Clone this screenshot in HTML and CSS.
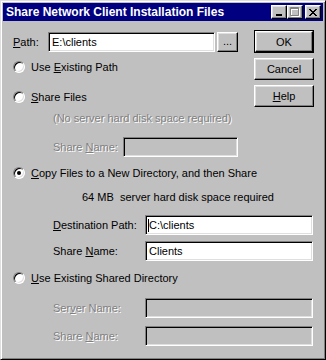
FILE: index.html
```html
<!DOCTYPE html>
<html lang="en">
<head>
  <meta charset="UTF-8">
  <title>Share Network Client Installation Files</title>
  <link rel="stylesheet" href="styles.css">
</head>
<body>
  <div class="window">
    <div class="titlebar">
      <span class="title">Share Network Client Installation Files</span>
      <div class="title-buttons">
        <span class="tbtn">
          <svg width="8" height="7" viewBox="0 0 8 7"><rect x="1" y="5" width="6" height="2" fill="#000"/></svg>
        </span>
        <span class="tbtn">
          <svg width="10" height="10" viewBox="0 0 10 10">
            <path d="M1.5 1.5h8v8h-8z M1 2.5h9" stroke="#fff" fill="none" stroke-width="1"/>
            <path d="M0.5 0.5h8v8h-8z M0 1.5h9" stroke="#808080" fill="none" stroke-width="1"/>
          </svg>
        </span>
        <span class="tbtn close">
          <svg width="8" height="7" viewBox="0 0 8 7" shape-rendering="crispEdges">
            <path d="M0 0h2v1h1v1h2v-1h1v-1h2v1h-1v1h-1v1h-1v1h1v1h1v1h1v1h-2v-1h-1v-1h-2v1h-1v1h-2v-1h1v-1h1v-1h1v-1h-1v-1h-1v-1h-1z" fill="#000"/>
          </svg>
        </span>
      </div>
    </div>

    <div class="dialog">
      <div class="top">
        <div class="top-left">
          <div class="path-row">
            <span class="lbl path-lbl"><u>P</u>ath:</span>
            <div class="field path-field">E:\clients</div>
            <span class="btn browse">...</span>
          </div>
          <div class="opt opt-existing">
            <span class="radio"></span>
            <span>Use <u>E</u>xisting Path</span>
          </div>
          <div class="opt opt-share">
            <span class="radio"></span>
            <span><u>S</u>hare Files</span>
          </div>
        </div>
        <div class="buttons">
          <span class="btn default"><span class="btn-inner">OK</span></span>
          <span class="btn cmd">Cancel</span>
          <span class="btn cmd"><u>H</u>elp</span>
        </div>
      </div>

      <div class="note note-free disabled">(No server hard disk space required)</div>
      <div class="field-row share-row">
        <span class="lbl disabled lbl-short">Share <u>N</u>ame:</span>
        <div class="field off share-field"></div>
      </div>

      <div class="opt opt-copy">
        <span class="radio checked"></span>
        <span><u>C</u>opy Files to a New Directory, and then Share</span>
      </div>
      <div class="note note-space">64 MB&nbsp;&nbsp;server hard disk space required</div>
      <div class="field-row dest-row">
        <span class="lbl lbl-wide"><u>D</u>estination Path:</span>
        <div class="field wide"><span class="caret"></span>C:\clients</div>
      </div>
      <div class="field-row name-row">
        <span class="lbl lbl-wide">Share <u>N</u>ame:</span>
        <div class="field wide">Clients</div>
      </div>

      <div class="opt opt-shared">
        <span class="radio"></span>
        <span><u>U</u>se Existing Shared Directory</span>
      </div>
      <div class="field-row server-row">
        <span class="lbl lbl-wide disabled">Ser<u>v</u>er Name:</span>
        <div class="field wide off"></div>
      </div>
      <div class="field-row last-row">
        <span class="lbl lbl-wide disabled">Share <u>N</u>ame:</span>
        <div class="field wide off"></div>
      </div>
    </div>
  </div>
</body>
</html>
```

FILE: styles.css
```css
body {
  margin: 0;
  background: #c0c0c0;
  font-family: "Liberation Sans", Arial, sans-serif;
  font-size: 11px;
  color: #000;
}
.window {
  width: 326px;
  height: 360px;
  box-sizing: border-box;
  background: #c0c0c0;
  border: 1px solid;
  border-color: #dfdfdf #000 #000 #dfdfdf;
  box-shadow: inset 1px 1px #fff, inset -1px -1px #808080;
  padding: 2px;
}

/* title bar */
.titlebar {
  height: 18px;
  background: #000080;
  color: #fff;
  display: flex;
  align-items: center;
  justify-content: space-between;
  padding: 0 2px 0 3px;
}
.title {
  font-weight: bold;
  font-size: 12px;
  white-space: nowrap;
}
.title-buttons {
  display: flex;
}
.tbtn {
  width: 16px;
  height: 14px;
  box-sizing: border-box;
  background: #c0c0c0;
  border: 1px solid;
  border-color: #fff #000 #000 #fff;
  box-shadow: inset -1px -1px #808080, inset 1px 1px #dfdfdf;
  display: flex;
  align-items: center;
  justify-content: center;
}
.tbtn.close {
  margin-left: 2px;
}

/* dialog body */
.dialog {
  padding: 9px 9px 0 10px;
}
.top {
  display: flex;
}
.top-left {
  flex: 1;
}
.path-row {
  height: 23px;
  display: flex;
  align-items: flex-start;
  padding-top: 2px;
  box-sizing: border-box;
}
.path-lbl {
  width: 35px;
  line-height: 20px;
}
.field {
  height: 20px;
  box-sizing: border-box;
  background: #fff;
  border: 1px solid;
  border-color: #808080 #fff #fff #808080;
  box-shadow: inset 1px 1px #000, inset -1px -1px #dfdfdf;
  padding: 0 3px;
  line-height: 18px;
  white-space: nowrap;
  display: flex;
  align-items: center;
}
.field.off {
  background: #c0c0c0;
}
.path-field {
  width: 167px;
}
.caret {
  width: 1px;
  height: 13px;
  background: #000;
  margin-left: -1px;
}

.btn {
  box-sizing: border-box;
  background: #c0c0c0;
  border: 1px solid;
  border-color: #fff #000 #000 #fff;
  box-shadow: inset -1px -1px #808080, inset 1px 1px #dfdfdf;
  display: flex;
  align-items: center;
  justify-content: center;
}
.browse {
  width: 21px;
  height: 20px;
  margin-left: 2px;
  padding-bottom: 2px;
}
.buttons {
  width: 60px;
  display: flex;
  flex-direction: column;
  gap: 5px;
}
.btn.default {
  height: 23px;
  border: 1px solid #000;
  box-shadow: none;
}
.btn-inner {
  width: 100%;
  height: 100%;
  box-sizing: border-box;
  border: 1px solid;
  border-color: #fff #000 #000 #fff;
  box-shadow: inset -1px -1px #808080, inset 1px 1px #dfdfdf;
  display: flex;
  align-items: center;
  justify-content: center;
}
.btn.cmd {
  height: 22px;
}

/* radio options */
.opt {
  height: 16px;
  display: flex;
  align-items: center;
  gap: 6px;
}
.radio {
  width: 12px;
  height: 12px;
  box-sizing: border-box;
  border-radius: 50%;
  background: #fff;
  border: 1px solid;
  border-color: #808080 #fff #fff #808080;
  box-shadow: inset 1px 1px #000, inset -1px -1px #dfdfdf;
  display: flex;
  align-items: center;
  justify-content: center;
}
.radio.checked::after {
  content: "";
  width: 4px;
  height: 4px;
  border-radius: 50%;
  background: #000;
}
.opt-existing { margin-top: 6px; }
.opt-share { margin-top: 14px; }
.opt-copy { margin-top: 8px; }
.opt-shared { margin-top: 9px; }

/* notes and labelled fields */
.note {
  height: 14px;
  line-height: 14px;
}
.note-free {
  margin-top: 4px;
  padding-left: 40px;
}
.note-space {
  margin-top: 9px;
  padding-left: 69px;
}
.disabled {
  color: #808080;
  text-shadow: 1px 1px 0 #fff;
}
.field-row {
  display: flex;
  align-items: center;
  padding-left: 40px;
}
.lbl-short { width: 70px; }
.lbl-wide { width: 92px; }
.share-field { width: 115px; }
.wide { width: 168px; }
.share-row { margin-top: 12px; }
.dest-row { margin-top: 11px; }
.name-row { margin-top: 6px; }
.server-row { margin-top: 12px; }
.last-row { margin-top: 8px; }
```
